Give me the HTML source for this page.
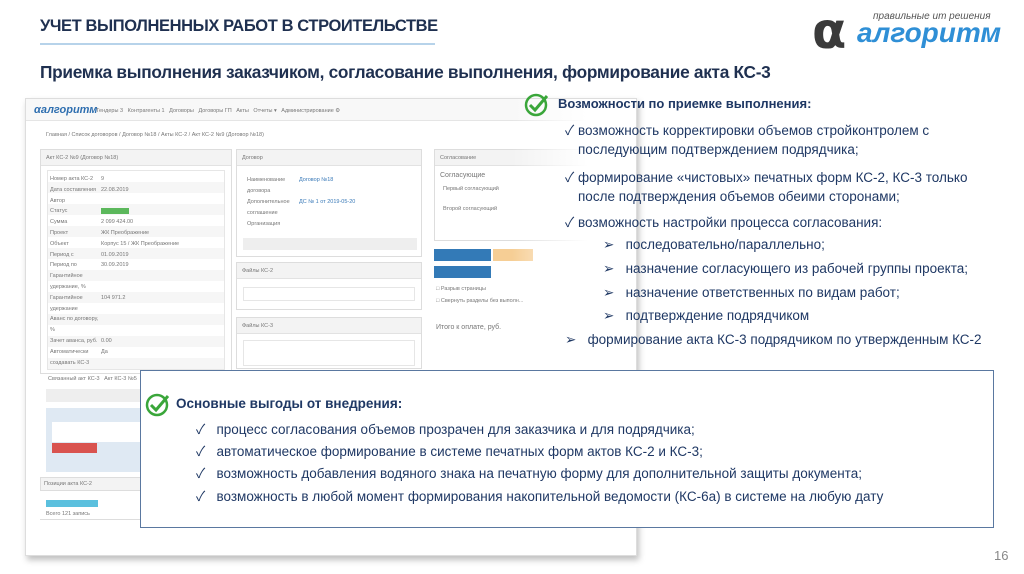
<!DOCTYPE html>
<html><head><meta charset="utf-8"><style>
*{margin:0;padding:0;box-sizing:border-box}
body{width:1024px;height:574px;background:#fff;position:relative;overflow:hidden;font-family:"Liberation Sans","Noto Sans CJK SC",sans-serif}
.a{position:absolute}
.t{color:#1f3050;font-weight:bold;white-space:nowrap}
.s{font-size:5.5px;color:#777;white-space:nowrap;position:absolute}
.pn{position:absolute;border:1px solid #ddd;background:#fff}
.ph{position:absolute;left:0;right:0;top:0;height:16px;background:#f3f3f3;border-bottom:1px solid #e2e2e2}
.row{position:absolute;left:6px;right:6px;border-top:1px solid #e6e6e6}
.r{font-size:13.5px;color:#1f3864;white-space:nowrap;position:absolute}
</style></head><body>
<div class="a t" style="left:40px;top:17px;font-size:16.5px;letter-spacing:-0.4px">УЧЕТ ВЫПОЛНЕННЫХ РАБОТ В СТРОИТЕЛЬСТВЕ</div>
<div class="a" style="left:40px;top:43px;width:395px;height:2px;background:#b7d3ea"></div>
<div class="a t" style="left:40px;top:62px;font-size:17.3px;letter-spacing:-0.3px">Приемка выполнения заказчиком, согласование выполнения, формирование акта КС-3</div>
<!-- logo -->
<div class="a" style="left:812px;top:6px;font-size:50px;color:#3a3a3a;font-family:'DejaVu Sans',sans-serif;font-weight:bold;line-height:50px">α</div>
<div class="a" style="left:873px;top:11px;font-size:10px;color:#555;font-style:italic;white-space:nowrap">правильные ит решения</div>
<div class="a" style="left:857px;top:17px;font-size:28px;color:#2f8fd6;font-weight:bold;font-style:italic;white-space:nowrap;letter-spacing:0px">алгоритм</div>
<!-- screenshot -->
<div class="a" style="left:25px;top:98px;width:612px;height:458px;background:#fff;border:1px solid #ddd;box-shadow:2px 4px 6px rgba(0,0,0,.25);overflow:hidden">
 <div class="a" style="left:0;top:0;right:0;height:22px;background:#f8f8f8;border-bottom:1px solid #e5e5e5"></div>
 <div class="a" style="left:8px;top:5px;font-size:11px;color:#2f6fb0;font-weight:bold;font-style:italic">αалгоритм</div>
 <div class="s" style="left:70px;top:9px">Тендеры 3 &nbsp; Контрагенты 1 &nbsp; Договоры &nbsp; Договоры ГП &nbsp; Акты &nbsp; Отчеты ▾ &nbsp; Администрирование ⚙</div>
 <div class="s" style="left:20px;top:33px">Главная / Список договоров / Договор №18 / Акты КС-2 / Акт КС-2 №9 (Договор №18)</div>
 <div class="pn" style="left:14px;top:50px;width:192px;height:225px"><div class="ph"></div>
  <div class="s" style="left:5px;top:5px">Акт КС-2 №9 (Договор №18)</div>
  <div class="a" style="left:6px;top:20px;width:178px;height:200px;border:1px solid #e6e6e6;background:repeating-linear-gradient(#fff 0,#fff 11px,#f6f6f6 11px,#f6f6f6 22px)"></div>
  <div class="s" style="left:9px;top:24px;line-height:10.8px">Номер акта КС-2<br>Дата составления<br>Автор<br>Статус<br>Сумма<br>Проект<br>Объект<br>Период с<br>Период по<br>Гарантийное<br>удержание, %<br>Гарантийное<br>удержание<br>Аванс по договору,<br>%<br>Зачет аванса, руб.<br>Автоматически<br>создавать КС-3</div>
  <div class="s" style="left:60px;top:24px;line-height:10.8px">9<br>22.08.2019<br><br><span style="background:#5cb85c;color:#5cb85c">Утвержден</span><br>2 099 424.00<br>ЖК Преображение<br>Корпус 15 / ЖК Преображение<br>01.09.2019<br>30.09.2019<br><br><br>104 971.2<br><br><br><br>0.00<br>Да</div>
 </div>
 <div class="s" style="left:22px;top:277px">Связанный акт КС-3 &nbsp; Акт КС-3 №5</div>
 <div class="a" style="left:20px;top:290px;width:180px;height:13px;background:#eee"></div>
 <div class="a" style="left:20px;top:309px;width:180px;height:64px;background:#dfe9f3"></div>
 <div class="a" style="left:26px;top:323px;width:170px;height:20px;background:#fff"></div>
 <div class="a" style="left:26px;top:344px;width:45px;height:10px;background:#d9534f"></div>
 <div class="a" style="left:14px;top:378px;width:190px;height:14px;background:#f3f3f3;border:1px solid #ddd"></div>
 <div class="s" style="left:18px;top:382px">Позиции акта КС-2</div>
 <div class="a" style="left:20px;top:401px;width:52px;height:7px;background:#5bc0de"></div>
 <div class="s" style="left:20px;top:412px">Всего 121 запись</div>
 <div class="a" style="left:14px;top:420px;width:598px;height:40px;border-top:1px solid #ddd;border-bottom:1px solid #ddd"></div>
 <div class="pn" style="left:210px;top:50px;width:186px;height:108px"><div class="ph"></div>
  <div class="s" style="left:5px;top:5px">Договор</div>
  <div class="s" style="left:10px;top:25px;line-height:11px">Наименование<br>договора<br>Дополнительное<br>соглашение<br>Организация<br><br>Контрагент</div>
  <div class="s" style="left:62px;top:25px;line-height:11px;color:#3a7ab8">Договор №18<br><br>ДС № 1 от 2019-05-20<br><br><br><br>ООО "СПЕЦМОНТАЖ"</div>
  <div class="a" style="left:6px;top:88px;width:174px;height:12px;background:#eee"></div>
 </div>
 <div class="pn" style="left:210px;top:163px;width:186px;height:48px"><div class="ph"></div><div class="s" style="left:5px;top:5px">Файлы КС-2</div><div class="row" style="top:24px;height:14px;border:1px solid #e6e6e6"></div></div>
 <div class="pn" style="left:210px;top:218px;width:186px;height:52px"><div class="ph"></div><div class="s" style="left:5px;top:5px">Файлы КС-3</div><div class="row" style="top:22px;height:26px;border:1px solid #e6e6e6"></div></div>
 <div class="pn" style="left:408px;top:50px;width:200px;height:92px"><div class="ph"></div>
  <div class="s" style="left:5px;top:5px">Согласование</div>
  <div class="s" style="left:5px;top:22px;font-size:7px">Согласующие</div>
  <div class="s" style="left:8px;top:36px">Первый согласующий</div><div class="s" style="left:8px;top:56px">Второй согласующий</div>
 </div>
 <div class="a" style="left:408px;top:150px;width:57px;height:12px;background:#337ab7"></div>
 <div class="a" style="left:467px;top:150px;width:40px;height:12px;background:#f0ad4e;opacity:.6"></div>
 <div class="a" style="left:408px;top:167px;width:57px;height:12px;background:#337ab7"></div>
 <div class="s" style="left:410px;top:187px">□ Разрыв страницы</div>
 <div class="s" style="left:410px;top:199px">□ Свернуть разделы без выполн...</div>
 <div class="s" style="left:410px;top:225px;font-size:7px">Итого к оплате, руб.</div>
 <div class="a" style="left:486px;top:0;width:126px;height:458px;background:linear-gradient(90deg,rgba(255,255,255,0),#fff 60%)"></div>
</div>
<!-- right text -->
<svg class="a" style="left:524px;top:92px" width="26" height="26" viewBox="0 0 26 26"><circle cx="12" cy="13" r="10" fill="none" stroke="#3aa63a" stroke-width="2.5"/><path d="M6 13l5 5L23 4" fill="none" stroke="#3aa63a" stroke-width="3"/></svg>
<div class="r t" style="left:558px;top:96px;font-size:13px">Возможности по приемке выполнения:</div>
<div class="r" style="left:565px;top:119px">✓ возможность корректировки объемов стройконтролем с</div>
<div class="r" style="left:578px;top:142px">последующим подтверждением подрядчика;</div>
<div class="r" style="left:565px;top:166px">✓ формирование «чистовых» печатных форм КС-2, КС-3 только</div>
<div class="r" style="left:578px;top:189px">после подтверждения объемов обеими сторонами;</div>
<div class="r" style="left:565px;top:211px">✓ возможность настройки процесса согласования:</div>
<div class="r" style="left:603px;top:237px">➢&nbsp;&nbsp;&nbsp;последовательно/параллельно;</div>
<div class="r" style="left:603px;top:261px">➢&nbsp;&nbsp;&nbsp;назначение согласующего из рабочей группы проекта;</div>
<div class="r" style="left:603px;top:285px">➢&nbsp;&nbsp;&nbsp;назначение ответственных по видам работ;</div>
<div class="r" style="left:603px;top:308px">➢&nbsp;&nbsp;&nbsp;подтверждение подрядчиком</div>
<div class="r" style="left:565px;top:332px">➢&nbsp;&nbsp;&nbsp;формирование акта КС-3 подрядчиком по утвержденным КС-2</div>
<!-- box -->
<div class="a" style="left:140px;top:370px;width:854px;height:158px;background:#fff;border:1.5px solid #5a78a0"></div>
<svg class="a" style="left:145px;top:392px" width="26" height="26" viewBox="0 0 26 26"><circle cx="12" cy="13" r="10" fill="none" stroke="#3aa63a" stroke-width="2.5"/><path d="M6 13l5 5L23 4" fill="none" stroke="#3aa63a" stroke-width="3"/></svg>
<div class="r t" style="left:176px;top:396px;font-size:13.5px">Основные выгоды от внедрения:</div>
<div class="r" style="left:196px;top:418px">✓&nbsp;&nbsp;&nbsp;процесс согласования объемов прозрачен для заказчика и для подрядчика;</div>
<div class="r" style="left:196px;top:440px">✓&nbsp;&nbsp;&nbsp;автоматическое формирование в системе печатных форм актов КС-2 и КС-3;</div>
<div class="r" style="left:196px;top:462px">✓&nbsp;&nbsp;&nbsp;возможность добавления водяного знака на печатную форму для дополнительной защиты документа;</div>
<div class="r" style="left:196px;top:485px">✓&nbsp;&nbsp;&nbsp;возможность в любой момент формирования накопительной ведомости (КС-6а) в системе на любую дату</div>
<div class="a" style="left:994px;top:548px;font-size:13px;color:#888">16</div>
</body></html>
